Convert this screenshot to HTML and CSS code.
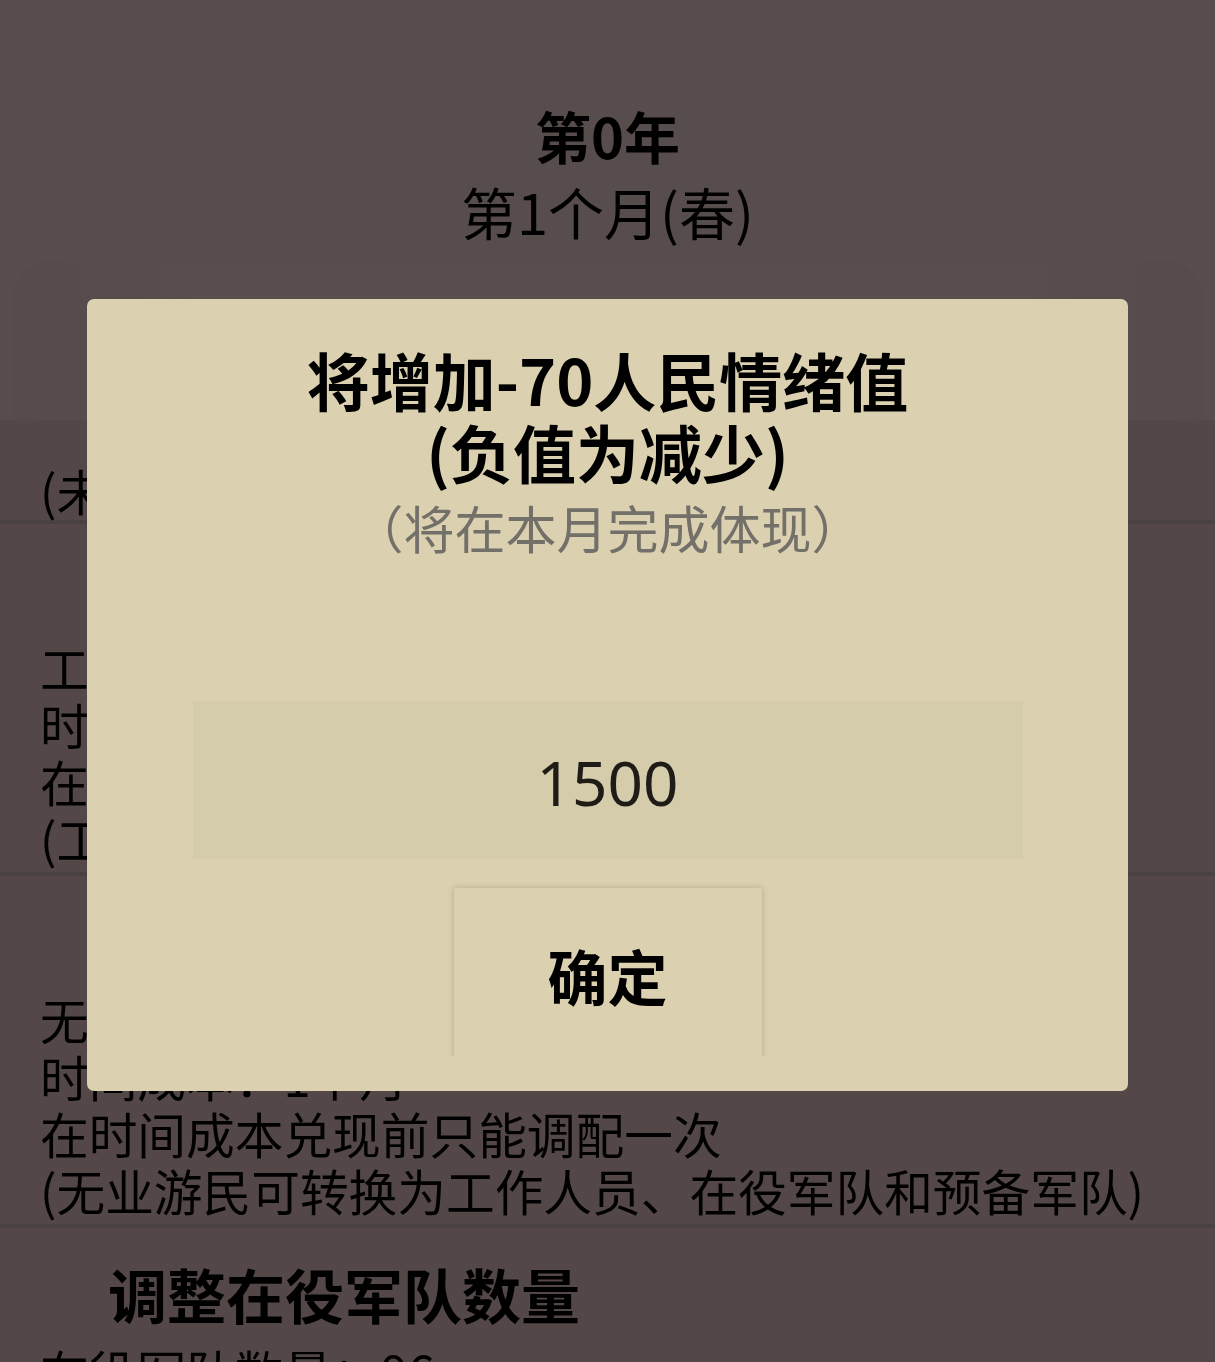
FILE: index.html
```html
<!DOCTYPE html>
<html lang="zh-CN">
<head>
<meta charset="utf-8">
<title>第0年</title>
<link rel="stylesheet" href="styles.css">
</head>
<body>
<div class="page">
  <header class="top">
    <div class="year">第0年</div>
    <div class="month">第1个月(春)</div>
    <div class="tabs"></div>
  </header>
  <section class="sec sec-first">
    <p class="line">(未使用的人口将自动成为无业游民)</p>
  </section>
  <section class="sec">
    <h2 class="sec-title">调整工作人员数量</h2>
    <p class="line">工作人员数量：1500</p>
    <p class="line">时间成本：1个月</p>
    <p class="line">在时间成本兑现前只能调配一次</p>
    <p class="line">(工作人员可转换为无业游民)</p>
  </section>
  <section class="sec">
    <h2 class="sec-title">调整无业游民数量</h2>
    <p class="line">无业游民数量：0</p>
    <p class="line">时间成本：1个月</p>
    <p class="line">在时间成本兑现前只能调配一次</p>
    <p class="line">(无业游民可转换为工作人员、在役军队和预备军队)</p>
  </section>
  <section class="sec">
    <h2 class="sec-title indent">调整在役军队数量</h2>
    <p class="line">在役军队数量：96</p>
  </section>
</div>

<div class="dialog">
  <div class="dialog-body">
    <h1 class="dialog-title">将增加-70人民情绪值<br>(负值为减少)</h1>
    <p class="dialog-note">（将在本月完成体现）</p>
    <div class="amount">1500</div>
    <div class="actions">
      <button class="ok">确定</button>
    </div>
  </div>
</div>
</body>
</html>
```

FILE: styles.css
```css
html, body {
  margin: 0;
  padding: 0;
}
body {
  background: #534747;
  font-family: "Noto Sans CJK SC", "Noto Sans", sans-serif;
  color: #000;
  overflow: hidden;
}
.page {
  width: 1215px;
}
.top {
  background: #564d4c;
  padding-top: 99px;
  height: 420px;
  box-sizing: border-box;
  text-align: center;
  display: flex;
  flex-direction: column;
  align-items: center;
}
.year {
  font-size: 56px;
  font-weight: 700;
  line-height: 72px;
}
.month {
  font-size: 56px;
  font-weight: 400;
  line-height: 80px;
}
.tabs {
  margin-top: 9px;
  width: 1190px;
  height: 160px;
  border-radius: 40px 40px 0 0;
  background: linear-gradient(to right, #544b4a, #574e4d 15%, #574e4d 85%, #544b4a);
}
.sec {
  border-bottom: 4px solid #4a4141;
  padding: 30px 40px 5px;
}
.sec-first {
  padding-top: 42px;
  padding-bottom: 1px;
}
.sec-title {
  margin: 0 0 13px;
  font-size: 59px;
  font-weight: 700;
  line-height: 72px;
  text-align: left;
  padding-left: 300px;
}
.sec-title.indent {
  padding-left: 68px;
}
.line {
  margin: 0;
  font-size: 48.7px;
  line-height: 57px;
  white-space: nowrap;
}

.dialog {
  position: fixed;
  left: 87px;
  top: 299px;
  width: 1041px;
  height: 792px;
  box-sizing: border-box;
  background: #dbd0b0;
  border-radius: 7px;
  padding-bottom: 35px;
}
.dialog-body {
  height: 757px;
  overflow: hidden;
  padding-top: 44px;
  box-sizing: border-box;
  display: flex;
  flex-direction: column;
  align-items: center;
}
.dialog-body > * {
  flex-shrink: 0;
}
.dialog-title {
  margin: 0;
  font-size: 63px;
  font-weight: 700;
  line-height: 72px;
  text-align: center;
}
.dialog-note {
  margin: 12px 0 0;
  font-size: 51px;
  line-height: 56px;
  color: #73706a;
}
.amount {
  margin-top: 146px;
  width: 830px;
  height: 158px;
  background: #d5ccac;
  display: flex;
  align-items: center;
  justify-content: center;
  font-family: "Noto Sans", sans-serif;
  font-size: 62px;
  color: #1f1c17;
  padding-top: 4px;
  box-sizing: border-box;
}
.actions {
  margin-top: 29px;
}
.ok {
  display: block;
  width: 308px;
  height: 172px;
  border: none;
  background: #dbd0b0;
  box-shadow: 0 0 6px rgba(0, 0, 0, 0.18);
  font-family: "Noto Sans CJK SC", sans-serif;
  font-size: 60px;
  font-weight: 700;
  color: #000;
  padding: 0;
}
```
